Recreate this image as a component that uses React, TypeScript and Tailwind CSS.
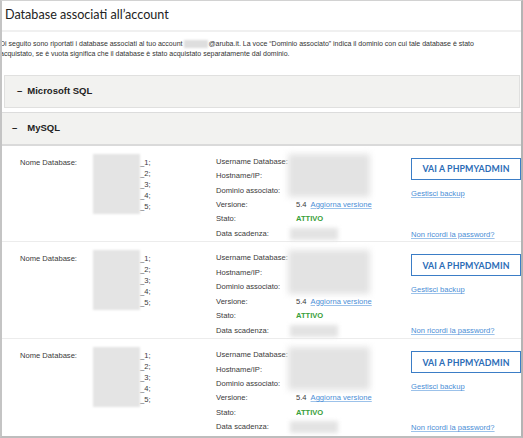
import React from "react";

const sans = { fontFamily: '"Liberation Sans", Arial, sans-serif' } as const;

function Blur({ w, h, className = "" }: { w: string; h: string; className?: string }) {
  return <div className={`${w} ${h} ${className} bg-[#e3e3e3] blur-[2px]`} />;
}

function DbRow({ last }: { last?: boolean }) {
  return (
    <div className={`flex h-[97px] pt-[9px] text-[7.6px] text-[#3a3a3a] ${last ? "" : "border-b border-[#ececec]"}`}>
      <div className="w-[91px] pl-[18px] leading-[11px] mt-[2px]">Nome Database:</div>
      <div className="w-[47px]">
        <div className="h-[60px] w-[47px] -mt-[1px] bg-[#e4e4e4] blur-[1px]" />
      </div>
      <div className="w-[76px] leading-[11px] mt-[2px]">
        <div>_1;</div>
        <div>_2;</div>
        <div>_3;</div>
        <div>_4;</div>
        <div>_5;</div>
      </div>
      <div className="w-[72px] leading-[14.4px]">
        <div>Username Database:</div>
        <div>Hostname/IP:</div>
        <div>Dominio associato:</div>
        <div>Versione:</div>
        <div>Stato:</div>
        <div>Data scadenza:</div>
      </div>
      <div className="w-[123px] leading-[14.4px]">
        <Blur w="w-[82px]" h="h-[43.2px]" className="-mt-[1px] mb-[1px] blur-[3px]" />
        <div className="pl-[8px] flex gap-[4px]">
          <span>5.4</span>
          <span className="text-[#4a8ed6] underline decoration-[#9cc2ea]">Aggiorna versione</span>
        </div>
        <div className="pl-[8px] font-bold text-[#3aa03a]">ATTIVO</div>
        <div className="h-[14.4px] flex items-center">
          <Blur w="w-[48px]" h="h-[12px]" className="ml-[2px]" />
        </div>
      </div>
      <div className="w-[110px] leading-[11px]">
        <div
          className="mt-[3px] h-[22px] border-[1.5px] border-[#3b7dc6] flex items-center justify-center text-[8.8px] font-bold text-[#2b6cb6] tracking-[0.1px]"
          style={{ fontFamily: 'Lato, "Liberation Sans", sans-serif' }}
        >
          VAI A PHPMYADMIN
        </div>
        <div className="mt-[8px] text-[#4a8ed6] underline decoration-[#9cc2ea]">Gestisci backup</div>
        <div className="mt-[30px] text-[#4a8ed6] underline decoration-[#9cc2ea]">Non ricordi la password?</div>
      </div>
    </div>
  );
}

export default function App() {
  return (
    <div
      className="w-[523px] h-[438px] bg-white border-t border-l-2 border-r-2 border-b-2 border-t-[#d2d2d2] border-l-[#c4c4c4] border-r-[#b4b4b4] border-b-[#bdbdbd] overflow-hidden flex flex-col"
      style={sans}
    >
      <div className="h-[31px] flex items-center pl-[3px] border-b-2 border-[#f0f0f0]">
        <h1
          className="text-[12.6px] text-[#222] leading-none"
          style={{ fontFamily: 'Lato, "Open Sans", sans-serif' }}
        >
          Database associati all’account
        </h1>
      </div>
      <div className="-ml-[2px] pt-[7px] text-[7px] leading-[10.5px] text-[#333]">
        <div className="flex items-center">
          <span>Di seguito sono riportati i database associati al tuo account&nbsp;</span>
          <span className="inline-block w-[24px] h-[8px] bg-[#dedede] blur-[1px]" />
          <span>@aruba.it. La voce “Dominio associato” indica il dominio con cui tale database è stato</span>
        </div>
        <div>acquistato, se è vuota significa che il database è stato acquistato separatamente dal dominio.</div>
      </div>
      <div className="mt-[15px] ml-[2px] mr-[1px] h-[33px] bg-[#f2f2f0] border border-[#e0e0df] flex items-center pl-[12px] text-[9.5px] font-bold text-[#222]">
        <span className="mr-[5px]">–</span>
        <span>Microsoft SQL</span>
      </div>
      <div className="mt-[4px] h-[34px] bg-[#f2f2f0] border-t border-[#dcdcdc] border-b-2 border-b-[#dadada] flex items-center pl-[10px] text-[9.5px] font-bold text-[#222]">
        <span className="mr-[10px]">–</span>
        <span>MySQL</span>
      </div>
      <DbRow />
      <DbRow />
      <DbRow last />
    </div>
  );
}
